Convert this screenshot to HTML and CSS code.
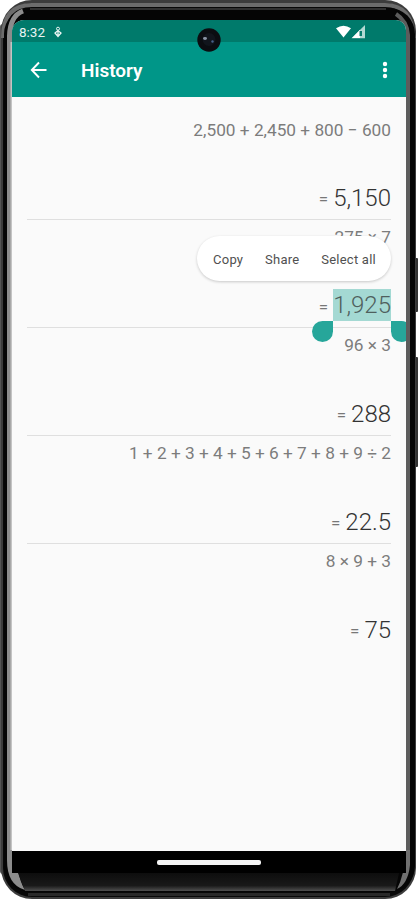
FILE: index.html
```html
<!DOCTYPE html>
<html lang="en">
<head>
<meta charset="utf-8">
<title>History</title>
<link rel="stylesheet" href="styles.css">
</head>
<body>
<div class="phone">
  <svg class="frame" width="418" height="900" viewBox="0 0 418 900" aria-hidden="true">
    <defs>
      <linearGradient id="chin" x1="0" y1="0" x2="0" y2="1">
        <stop offset="0" stop-color="#0d0d0d"/><stop offset=".7" stop-color="#191919"/><stop offset="1" stop-color="#505050"/>
      </linearGradient>
    </defs>
    <rect x="0" y="24" width="10" height="850" rx="3" fill="#555"/>
    <rect x="412" y="258" width="6" height="54" rx="1" fill="#333"/>
    <rect x="412" y="357" width="6" height="110" rx="1" fill="#333"/>
    <rect x="1" y="0" width="415" height="899" rx="31" fill="#3c3c3c"/>
    <rect x="3" y="3" width="411" height="894" rx="29" fill="#080808"/>
    <path d="M3 38Q3 5 32 5H385Q412 5 413.500 38" fill="none" stroke="#6c6c6c" stroke-width="4"/>
    <rect x="4" y="8" width="411" height="884" rx="26" fill="#050505"/>
    <path d="M30 9H386" stroke="#303030" stroke-width="2"/>
    <path d="M9.500 854V36Q10 16 23 11" fill="none" stroke="#8c8c8c" stroke-width="5"/>
    <path d="M11.500 852V42" fill="none" stroke="#c4c4c4" stroke-width="2"/>
    <path d="M7 850h5v7q6 4 6 13 2 12 7 20-18-5-18-30z" fill="#8c8c8c"/>
    <path d="M408 854V35q-1-14-12-21" fill="none" stroke="#5c5c5c" stroke-width="4"/>
    <path d="M406 850h4v15q-2 19-13 24 7-13 9-37z" fill="#707070"/>
    <path d="M18 873h381l-4 18H25z" fill="url(#chin)"/>
    <path d="M28 894.500H390" stroke="#292929" stroke-width="3"/>
  </svg>
  <main class="screen">
    <div class="status">
      <span class="clock">8:32</span>
      <svg class="touch" width="8" height="12" viewBox="0 0 8 12"><circle cx="4" cy="2.700" r="1.500" fill="none" stroke="#e8f4f2"/><path d="M4 4.500 1 7l3 3.500L7 7zM4 5v4" fill="none" stroke="#e8f4f2" stroke-width="1.300"/></svg>
      <svg class="signal" width="30" height="14" viewBox="0 0 30 14"><path d="M0 3.300Q7.500-2 15 3.300L7.500 12.500z" fill="#fff"/><path d="M15.500 13.300 29 0v13.300z" fill="#b2d9d3"/><path d="M16 13 24 4.700V13z" fill="#fff"/><path d="M23.500 6h2.500v5h-2.500z" fill="#087c6d"/></svg>
    </div>
    <header class="appbar">
      <svg class="back" width="18" height="18" viewBox="0 0 18 18"><path d="M9 1.500 1.800 9 9 16.500M2 9h14.500" fill="none" stroke="#fff" stroke-width="1.900"/></svg>
      <h1>History</h1>
      <svg class="more" width="6" height="18" viewBox="0 0 6 18" fill="#fff"><circle cx="3" cy="3" r="2.200"/><circle cx="3" cy="9" r="2.200"/><circle cx="3" cy="15" r="2.200"/></svg>
    </header>
    <div class="history">
      <section class="entry"><p class="expr">2,500 + 2,450 + 800 − 600</p><p class="result"><i>=</i><b>5,150</b></p></section>
      <section class="entry"><p class="expr">275 × 7</p><p class="result"><i>=</i><b class="selected">1,925</b></p>
        <div class="menu"><span>Copy</span><span>Share</span><span>Select all</span></div>
        <span class="handle start"></span><span class="handle end"></span>
      </section>
      <section class="entry"><p class="expr">96 × 3</p><p class="result"><i>=</i><b>288</b></p></section>
      <section class="entry"><p class="expr">1 + 2 + 3 + 4 + 5 + 6 + 7 + 8 + 9 ÷ 2</p><p class="result"><i>=</i><b>22.5</b></p></section>
      <section class="entry"><p class="expr">8 × 9 + 3</p><p class="result"><i>=</i><b>75</b></p></section>
    </div>
  </main>
  <div class="navbar"><span class="pill"></span></div>
  <svg class="camera" width="24" height="24" viewBox="0 0 24 24"><circle cx="12" cy="12" r="11.700" fill="#0b0d11"/><circle cx="12" cy="11.500" r="6.500" fill="#11151c"/><ellipse cx="8" cy="10.500" rx="2" ry="1.400" fill="#8b95a5"/><circle cx="15.500" cy="13.500" r="1.200" fill="#47618b"/></svg>
</div>
</body>
</html>
```
FILE: styles.css
```css
* { box-sizing: border-box; }
body { margin: 0; background: #fff; font-family: Roboto, "Liberation Sans", sans-serif; }
p, h1 { margin: 0; }
svg { display: block; flex: none; }
.phone { position: relative; width: 418px; height: 900px; padding: 20px 12px 0; overflow: hidden; }
.frame { position: absolute; left: 0; top: 0; }
.screen { position: relative; width: 394px; height: 831px; background: #fafafa; overflow: hidden; border-radius: 12px 10px 0 0; }
.status { height: 22px; background: #007a6b; display: flex; align-items: center; padding: 2px 40px 0 7px; color: #e8f4f2; }
.clock { font-size: 13.5px; line-height: 20px; width: 35px; }
.signal { margin-left: auto; }
.appbar { height: 55px; background: #009688; display: flex; align-items: center; padding: 0 18px; color: #fff; }
.appbar h1 { margin-left: 33px; font-size: 19px; line-height: 24px; font-weight: 600; padding-top: 2px; }
.more { margin-left: auto; }
.history { padding: 15px 15px 0; }
.entry { position: relative; height: 108px; border-bottom: 1px solid #dfdfdf; text-align: right; display: flex; flex-direction: column; justify-content: space-between; padding: 6px 0 4px; }
.entry:first-child { padding-top: 7px; }
.entry:last-child { border-bottom-color: transparent; }
.expr { font-size: 17.25px; line-height: 22px; font-weight: 400; color: #7c7c7c; }
.result { display: flex; justify-content: flex-end; align-items: center; color: #333; line-height: 32px; }
.result i { font-style: normal; font-size: 17px; font-weight: 400; color: #777; margin-right: 5px; padding-top: 2px; }
.result b { font-size: 24px; font-weight: 350; }
.result .selected { background: #a4d9d3; color: #4f5f5d; line-height: 31px; padding-top: 1px; margin-top: -2px; }
.menu { position: absolute; right: 0; top: 16px; width: 194px; height: 45px; border-radius: 23px; background: #fff; box-shadow: 0 1px 3px rgba(0,0,0,.2); display: flex; align-items: center; justify-content: space-between; padding: 1px 15px 0 16px; font-size: 13px; letter-spacing: .25px; color: #505050; }
.handle { position: absolute; top: 101px; width: 21px; height: 21px; background: #26a69a; z-index: 1; }
.start { right: 58px; border-radius: 50% 0 50% 50%; }
.end { left: 364px; border-radius: 0 50% 50% 50%; }
.navbar { position: relative; height: 22px; background: #000; display: flex; justify-content: center; padding-top: 9px; }
.pill { width: 104px; height: 5px; border-radius: 2px; background: #f5f5f5; }
.camera { position: absolute; left: 197px; top: 28px; }
```
